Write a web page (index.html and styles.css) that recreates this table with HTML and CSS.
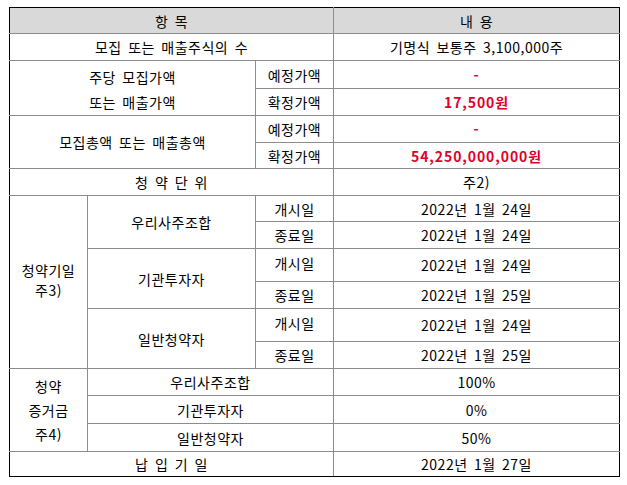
FILE: index.html
```html
<!DOCTYPE html>
<html lang="ko">
<head>
<meta charset="utf-8">
<link rel="stylesheet" href="styles.css">
</head>
<body>
<table class="tbl">
  <colgroup>
    <col class="c1"><col class="c2"><col class="c3"><col class="c4">
  </colgroup>
  <tr class="h26 head">
    <td colspan="3">항 목</td>
    <td>내 용</td>
  </tr>
  <tr class="h27">
    <td colspan="3">모집 또는 매출주식의 수</td>
    <td>기명식 보통주 3,100,000주</td>
  </tr>
  <tr class="h27">
    <td colspan="2" rowspan="2" class="two">주당 모집가액<br>또는 매출가액</td>
    <td>예정가액</td>
    <td class="red">-</td>
  </tr>
  <tr class="h26">
    <td>확정가액</td>
    <td class="red">17,500원</td>
  </tr>
  <tr class="h27">
    <td colspan="2" rowspan="2">모집총액 또는 매출총액</td>
    <td>예정가액</td>
    <td class="red">-</td>
  </tr>
  <tr class="h26">
    <td>확정가액</td>
    <td class="red">54,250,000,000원</td>
  </tr>
  <tr class="h27">
    <td colspan="3">청 약 단 위</td>
    <td>주2)</td>
  </tr>
  <tr class="h26">
    <td rowspan="6" class="tight">청약기일<br>주3)</td>
    <td rowspan="2">우리사주조합</td>
    <td>개시일</td>
    <td>2022년 1월 24일</td>
  </tr>
  <tr class="h27">
    <td>종료일</td>
    <td>2022년 1월 24일</td>
  </tr>
  <tr class="h33">
    <td rowspan="2">기관투자자</td>
    <td class="up">개시일</td>
    <td>2022년 1월 24일</td>
  </tr>
  <tr class="h27">
    <td>종료일</td>
    <td>2022년 1월 25일</td>
  </tr>
  <tr class="h33">
    <td rowspan="2">일반청약자</td>
    <td class="up">개시일</td>
    <td>2022년 1월 24일</td>
  </tr>
  <tr class="h27">
    <td>종료일</td>
    <td>2022년 1월 25일</td>
  </tr>
  <tr class="h27">
    <td rowspan="3" class="three">청약<br>증거금<br>주4)</td>
    <td colspan="2">우리사주조합</td>
    <td>100%</td>
  </tr>
  <tr class="h28">
    <td colspan="2">기관투자자</td>
    <td>0%</td>
  </tr>
  <tr class="h28">
    <td colspan="2">일반청약자</td>
    <td>50%</td>
  </tr>
  <tr class="h25">
    <td colspan="3">납 입 기 일</td>
    <td>2022년 1월 27일</td>
  </tr>
</table>
</body>
</html>
```

FILE: styles.css
```css
html, body {
  margin: 0;
  padding: 0;
  background: #ffffff;
}

body {
  font-family: "Noto Sans CJK KR", "Noto Sans", sans-serif;
  font-size: 14px;
  color: #000000;
}

.tbl {
  margin: 7px 0 0 9px;
  width: 610px;
  border-collapse: collapse;
  border: 1px solid #000000;
  table-layout: fixed;
}

.c1 { width: 78px; }
.c2 { width: 168px; }
.c3 { width: 78px; }
.c4 { width: 286px; }

.tbl td {
  border: 1px solid #8c8c8c;
  text-align: center;
  vertical-align: middle;
  padding: 0;
  line-height: 18px;
  white-space: nowrap;
  letter-spacing: 0.5px;
  word-spacing: 2px;
}

.tbl tr:first-child td { border-top-color: #000000; }
.tbl tr:last-child td { border-bottom-color: #000000; }
.tbl td:first-child { border-left-color: #000000; }
.tbl td:last-child { border-right-color: #000000; }

.head td { background: #d9d9d9; }

.h25 { height: 25px; }
.h26 { height: 26px; }
.h27 { height: 27px; }
.h28 { height: 28px; }
.h33 { height: 33px; }

.two { line-height: 25px !important; padding-top: 4px !important; }
.tight { line-height: 20px !important; padding-bottom: 4px !important; }
.three { line-height: 24px !important; }
.up { padding-bottom: 5px !important; }

.red {
  color: #e1002a;
  font-weight: bold;
  letter-spacing: 0.9px !important;
}
```
